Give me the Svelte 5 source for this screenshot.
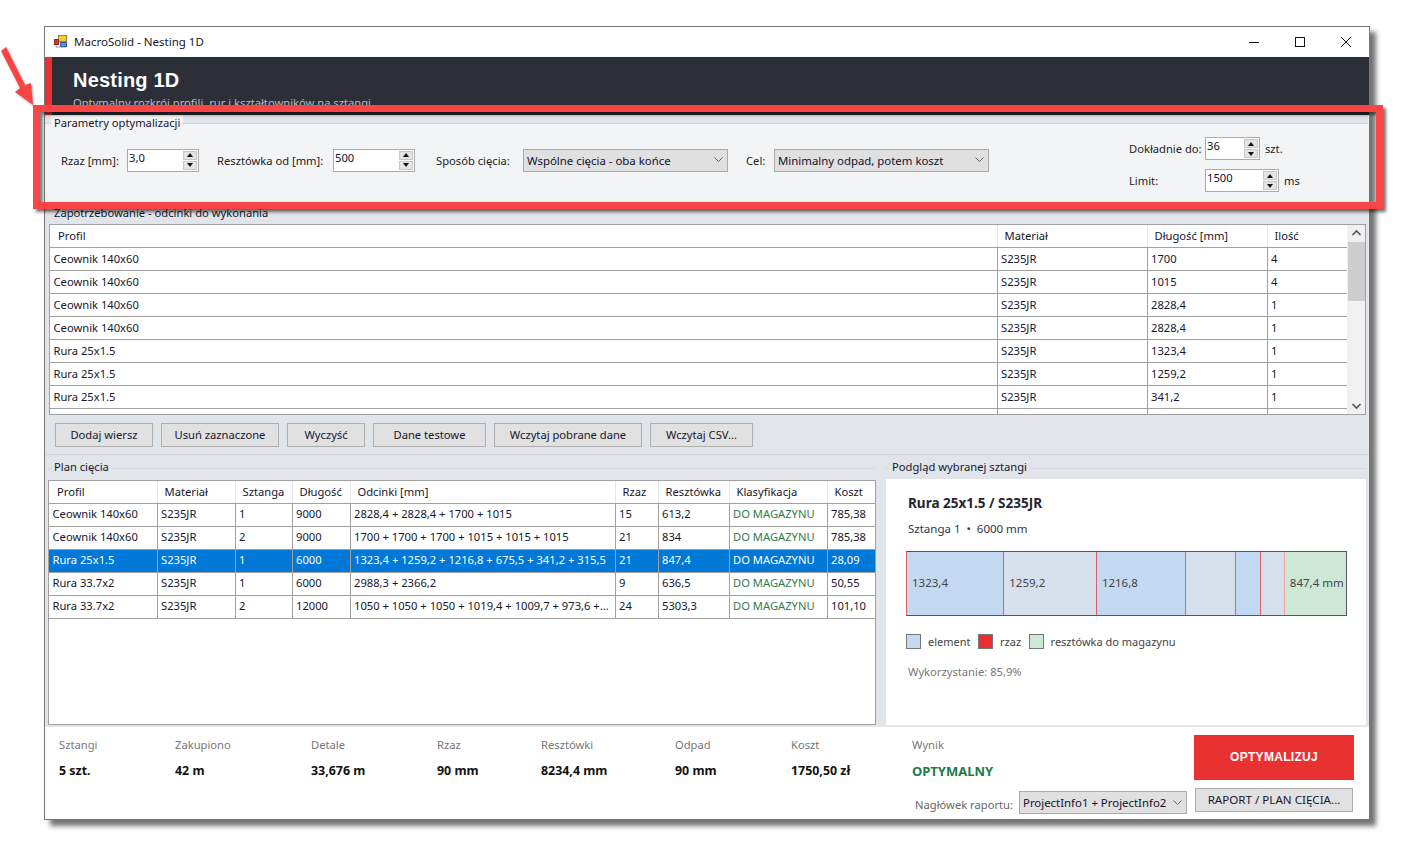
<script>
	const demand = [
		['Ceownik 140x60', 'S235JR', '1700', '4'],
		['Ceownik 140x60', 'S235JR', '1015', '4'],
		['Ceownik 140x60', 'S235JR', '2828,4', '1'],
		['Ceownik 140x60', 'S235JR', '2828,4', '1'],
		['Rura 25x1.5', 'S235JR', '1323,4', '1'],
		['Rura 25x1.5', 'S235JR', '1259,2', '1'],
		['Rura 25x1.5', 'S235JR', '341,2', '1']
	];

	const plan = [
		['Ceownik 140x60', 'S235JR', '1', '9000', '2828,4 + 2828,4 + 1700 + 1015', '15', '613,2', 'DO MAGAZYNU', '785,38'],
		['Ceownik 140x60', 'S235JR', '2', '9000', '1700 + 1700 + 1700 + 1015 + 1015 + 1015', '21', '834', 'DO MAGAZYNU', '785,38'],
		['Rura 25x1.5', 'S235JR', '1', '6000', '1323,4 + 1259,2 + 1216,8 + 675,5 + 341,2 + 315,5', '21', '847,4', 'DO MAGAZYNU', '28,09'],
		['Rura 33.7x2', 'S235JR', '1', '6000', '2988,3 + 2366,2', '9', '636,5', 'DO MAGAZYNU', '50,55'],
		['Rura 33.7x2', 'S235JR', '2', '12000', '1050 + 1050 + 1050 + 1019,4 + 1009,7 + 973,6 +...', '24', '5303,3', 'DO MAGAZYNU', '101,10']
	];
	const wybrany = 2;

	const buttons = [
		['Dodaj wiersz', 98],
		['Usuń zaznaczone', 118],
		['Wyczyść', 78],
		['Dane testowe', 113],
		['Wczytaj pobrane dane', 148],
		['Wczytaj CSV...', 103]
	];

	const stats = [
		['Sztangi', '5 szt.', 116],
		['Zakupiono', '42 m', 136],
		['Detale', '33,676 m', 126],
		['Rzaz', '90 mm', 104],
		['Resztówki', '8234,4 mm', 134],
		['Odpad', '90 mm', 116],
		['Koszt', '1750,50 zł', 121]
	];

	const odcinki = [
		{ v: 1323.4, t: '1323,4' },
		{ v: 1259.2, t: '1259,2' },
		{ v: 1216.8, t: '1216,8' },
		{ v: 675.5, t: '' },
		{ v: 341.2, t: '' },
		{ v: 315.5, t: '' }
	];
	const dlugosc = 6000;
	const rzaz = 3.5;
	const proc = (v) => ((v + rzaz) / dlugosc) * 100;
</script>

{#snippet spinner(value, cls)}
	<div class="spin {cls}">
		<span class="spin-val">{value}</span>
		<div class="spin-btns">
			<span class="spin-btn"><i class="up"></i></span>
			<span class="spin-btn"><i class="down"></i></span>
		</div>
	</div>
{/snippet}

{#snippet chevron()}
	<svg class="chev" width="9" height="6" viewBox="0 0 9 6"><path d="M0.5 0.5 L4.5 4.5 L8.5 0.5" fill="none" stroke="#666" stroke-width="1" /></svg>
{/snippet}

<div class="page">
	<div class="window">
		<div class="titlebar">
			<svg class="appicon" width="16" height="16" viewBox="0 0 16 16">
				<path d="M3 5V13H13" fill="none" stroke="#999" />
				<rect x="5.5" y="1.5" width="8" height="6" fill="#f5c842" stroke="#a08428" />
				<rect x="1.5" y="5.5" width="4" height="5" fill="#d8352a" stroke="#8a2a20" />
				<rect x="7.5" y="8.5" width="6" height="4" fill="#5b8fd8" stroke="#3a5f9a" />
			</svg>
			<span class="wintitle">MacroSolid - Nesting 1D</span>
			<div class="winbtns">
				<span class="winbtn"><svg width="10" height="10" viewBox="0 0 10 10"><path d="M0 5.5H10" stroke="#111" /></svg></span>
				<span class="winbtn"><svg width="10" height="10" viewBox="0 0 10 10"><rect x="0.5" y="0.5" width="9" height="9" fill="none" stroke="#111" /></svg></span>
				<span class="winbtn"><svg width="10" height="10" viewBox="0 0 10 10"><path d="M0 0L10 10M10 0L0 10" stroke="#111" /></svg></span>
			</div>
		</div>

		<header class="banner">
			<h1>Nesting 1D</h1>
			<p>Optymalny rozkrój profili, rur i kształtowników na sztangi</p>
		</header>

		<section class="params">
			<div class="group-line"><span>Parametry optymalizacji</span></div>
			<div class="params-row">
				<label class="l-rzaz">Rzaz [mm]:</label>
				{@render spinner('3,0', 'w72')}
				<label class="l-reszt">Resztówka od [mm]:</label>
				{@render spinner('500', 'w82')}
				<label class="l-sposob">Sposób cięcia:</label>
				<div class="combo w205"><span>Wspólne cięcia - oba końce</span>{@render chevron()}</div>
				<label class="l-cel">Cel:</label>
				<div class="combo w215"><span>Minimalny odpad, potem koszt</span>{@render chevron()}</div>
				<div class="params-right">
					<div class="pr-row">
						<label>Dokładnie do:</label>
						{@render spinner('36', 'w55')}
						<span class="unit">szt.</span>
					</div>
					<div class="pr-row">
						<label>Limit:</label>
						{@render spinner('1500', 'w74')}
						<span class="unit">ms</span>
					</div>
				</div>
			</div>
		</section>

		<section class="demand">
			<div class="legend-plain">Zapotrzebowanie - odcinki do wykonania</div>
			<div class="grid-box demand-box">
				<div class="grid-scroll">
					<table>
						<colgroup><col style="width:947px" /><col style="width:150px" /><col style="width:120px" /><col style="width:80px" /></colgroup>
						<thead><tr><th>Profil</th><th>Materiał</th><th>Długość [mm]</th><th>Ilość</th></tr></thead>
						<tbody>
							{#each demand as r}
								<tr>{#each r as c}<td>{c}</td>{/each}</tr>
							{/each}
							<tr class="cut"><td></td><td></td><td></td><td></td></tr>
						</tbody>
					</table>
				</div>
				<div class="scrollbar">
					<svg width="17" height="17" viewBox="0 0 17 17"><path d="M4.5 10L8.5 6L12.5 10" fill="none" stroke="#555" stroke-width="1.6" /></svg>
					<div class="thumb-track"><div class="thumb"></div></div>
					<svg width="17" height="17" viewBox="0 0 17 17"><path d="M4.5 7L8.5 11L12.5 7" fill="none" stroke="#555" stroke-width="1.6" /></svg>
				</div>
			</div>
			<div class="btn-row">
				{#each buttons as b}
					<button class="btn" style="width: {b[1]}px">{b[0]}</button>
				{/each}
			</div>
		</section>

		<section class="results">
			<div class="plan">
				<div class="legend-line"><span>Plan cięcia</span></div>
				<div class="grid-box plan-box">
					<table>
						<colgroup>
							<col style="width:108px" /><col style="width:78px" /><col style="width:57px" /><col style="width:58px" />
							<col style="width:265px" /><col style="width:43px" /><col style="width:71px" /><col style="width:98px" /><col style="width:48px" />
						</colgroup>
						<thead>
							<tr><th>Profil</th><th>Materiał</th><th>Sztanga</th><th>Długość</th><th>Odcinki [mm]</th><th>Rzaz</th><th>Resztówka</th><th>Klasyfikacja</th><th>Koszt</th></tr>
						</thead>
						<tbody>
							{#each plan as r, i}
								<tr class:sel={i === wybrany}>
									{#each r as c, j}<td class:green={j === 7}>{c}</td>{/each}
								</tr>
							{/each}
						</tbody>
					</table>
				</div>
			</div>
			<div class="preview">
				<div class="legend-line"><span>Podgląd wybranej sztangi</span></div>
				<div class="preview-panel">
					<h2>Rura 25x1.5 / S235JR</h2>
					<p class="sub">Sztanga 1 &nbsp;•&nbsp; 6000 mm</p>
					<div class="bar">
						{#each odcinki as o, i}
							<div class="seg" class:alt={i % 2 === 1} style="width: {proc(o.v)}%">{o.t}</div>
						{/each}
						<div class="seg rest">847,4 mm</div>
					</div>
					<div class="key">
						<span class="sw sw-el"></span><span>element</span>
						<span class="sw sw-rz"></span><span>rzaz</span>
						<span class="sw sw-re"></span><span>resztówka do magazynu</span>
					</div>
					<p class="usage">Wykorzystanie: 85,9%</p>
				</div>
			</div>
		</section>

		<footer class="foot">
			<div class="stats">
				{#each stats as s}
					<div class="stat" style="width: {s[2]}px">
						<div class="st-label">{s[0]}</div>
						<div class="st-value">{s[1]}</div>
					</div>
				{/each}
				<div class="stat">
					<div class="st-label">Wynik</div>
					<div class="st-value ok">OPTYMALNY</div>
				</div>
			</div>
			<button class="run">OPTYMALIZUJ</button>
			<div class="report">
				<span class="rep-label">Nagłówek raportu:</span>
				<div class="combo w168 c-rep"><span>ProjectInfo1 + ProjectInfo2</span>{@render chevron()}</div>
			</div>
			<button class="btn rep-btn">RAPORT / PLAN CIĘCIA...</button>
		</footer>
	</div>

	<!-- adnotacja na zrzucie -->
	<div class="mark"></div>
	<svg class="arrow" width="40" height="70" viewBox="0 0 40 70">
		<path d="M1 13 L6 9 L25 47 L31 45 L33 67 L15 54 L20 50 Z" fill="#fb4444" />
	</svg>
</div>

<style>
	:global(body) {
		margin: 0;
		background: #fff;
	}

	.page {
		position: relative;
		width: 1410px;
		height: 848px;
		padding: 26px 0 0 44px;
		box-sizing: border-box;
		font-family: "Noto Sans", "Open Sans", sans-serif;
		font-size: 11.2px;
		color: #111;
		overflow: hidden;
	}

	.window {
		width: 1326px;
		height: 794px;
		box-sizing: border-box;
		border: 1px solid #777;
		background: #e1e4e9;
		box-shadow: 6px 6px 5px rgba(0, 0, 0, 0.55);
		display: flex;
		flex-direction: column;
	}

	.titlebar {
		height: 30px;
		flex: none;
		background: #fff;
		display: flex;
		align-items: center;
		padding-left: 8px;
	}

	.appicon {
		margin-right: 5px;
	}

	.wintitle {
		font-size: 11.5px;
		color: #16162e;
		padding-bottom: 1px;
	}

	.winbtns {
		margin-left: auto;
		display: flex;
	}

	.winbtn {
		width: 46px;
		height: 30px;
		display: flex;
		align-items: center;
		justify-content: center;
	}

	.banner {
		height: 58px;
		flex: none;
		box-sizing: border-box;
		background: #2c2f38;
		border-left: 7px solid #e93131;
		padding: 10px 0 0 21px;
		overflow: hidden;
	}

	h1 {
		margin: 0;
		font-size: 20px;
		line-height: 27px;
		font-weight: 700;
		color: #fff;
		letter-spacing: 0.2px;
		font-family: "Liberation Sans", sans-serif;
	}

	.banner p {
		margin: 0;
		font-size: 11.2px;
		line-height: 18px;
		color: #b8bbc2;
	}

	.params {
		height: 91px;
		flex: none;
		box-sizing: border-box;
		background: #f3f4f6;
		position: relative;
		padding-top: 0;
	}

	.group-line {
		height: 8px;
		border-bottom: 1px solid #d6d8dc;
		background: #e1e4e9;
		position: relative;
		margin-right: 1px;
	}

	.group-line span {
		position: absolute;
		left: 6px;
		top: 0;
		line-height: 16px;
		padding: 0 3px;
		background: #f3f4f6;
		color: #16162e;
	}

	.params-row {
		display: flex;
		align-items: center;
		height: 68px;
		padding-left: 16px;
		margin-top: 2px;
	}

	.params-row > label {
		color: #222;
		white-space: nowrap;
	}

	.l-rzaz { width: 66px; }
	.l-reszt { width: 116px; margin-left: 18px; }
	.l-sposob { width: 87px; margin-left: 21px; }
	.l-cel { width: 28px; margin-left: 18px; }

	.spin {
		height: 23px;
		box-sizing: border-box;
		border: 1px solid #aaa;
		background: #fff;
		position: relative;
		flex: none;
	}

	.w72 { width: 72px; }
	.w82 { width: 82px; }
	.w55 { width: 55px; }
	.w74 { width: 74px; }

	.spin-val {
		position: absolute;
		left: 1px;
		top: 0;
		line-height: 16px;
		color: #101030;
	}

	.spin-btns {
		position: absolute;
		right: 1px;
		top: 1px;
		bottom: 1px;
		width: 14px;
		display: flex;
		flex-direction: column;
		gap: 1px;
	}

	.spin-btn {
		flex: 1;
		background: #e4e4e4;
		border: 1px solid #c8c8c8;
		display: flex;
		align-items: center;
		justify-content: center;
	}

	.spin-btn i {
		width: 0;
		height: 0;
		border-left: 3px solid transparent;
		border-right: 3px solid transparent;
	}

	.up { border-bottom: 4px solid #111; }
	.down { border-top: 4px solid #111; }

	.combo {
		height: 23px;
		box-sizing: border-box;
		border: 1px solid #aaa;
		background: #e0e0e0;
		display: flex;
		align-items: center;
		justify-content: space-between;
		padding: 0 4px 0 3px;
		color: #101030;
		font-size: 11.4px;
		flex: none;
		white-space: nowrap;
	}

	.w205 { width: 205px; }
	.w215 { width: 215px; }
	.w168 { width: 168px; }

	.params-right {
		margin-left: 140px;
		display: flex;
		flex-direction: column;
		gap: 9px;
		margin-top: 9px;
	}

	.pr-row {
		display: flex;
		align-items: center;
	}

	.pr-row label {
		width: 76px;
		color: #222;
		white-space: nowrap;
	}

	.unit {
		margin-left: 5px;
		color: #222;
	}

	.demand {
		height: 249px;
		flex: none;
		box-sizing: border-box;
		padding: 0 3px 0 4px;
		border-bottom: 1px solid #d3d6db;
	}

	.legend-plain {
		line-height: 14px;
		padding: 0 0 0 5px;
		height: 18px;
		color: #16162e;
	}

	.grid-box {
		box-sizing: border-box;
		border: 1px solid #a0a0a0;
		background: #fff;
		overflow: hidden;
	}

	.demand-box {
		height: 191px;
		display: flex;
	}

	.demand-box td {
		padding-bottom: 0;
	}

	.grid-scroll {
		flex: 1;
		overflow: hidden;
	}

	table {
		table-layout: fixed;
		border-collapse: collapse;
		width: 100%;
	}

	th {
		height: 22px;
		box-sizing: border-box;
		padding: 0 0 0 7px;
		text-align: left;
		font-weight: 400;
		color: #16162e;
		border-right: 1px solid #e6e6e6;
		border-bottom: 1px solid #a0a0a0;
		white-space: nowrap;
		overflow: hidden;
		background: #fff;
	}

	th:first-child {
		padding-left: 8px;
	}

	td {
		height: 23px;
		box-sizing: border-box;
		padding: 0 0 1.5px 3.5px;
		border-right: 1px solid #a0a0a0;
		border-bottom: 1px solid #a0a0a0;
		white-space: nowrap;
		overflow: hidden;
		color: #16162e;
	}

	.green {
		color: #2f7d4d;
	}

	tr.sel td {
		background: #0078d7;
		color: #fff;
	}

	.scrollbar {
		width: 17px;
		flex: none;
		background: #f0f0f0;
		display: flex;
		flex-direction: column;
		border-left: 1px solid #f0f0f0;
	}

	.thumb-track {
		flex: 1;
	}

	.thumb {
		height: 59px;
		background: #cdcdcd;
	}

	.btn-row {
		display: flex;
		gap: 8px;
		padding: 8px 0 0 6px;
	}

	.btn {
		height: 24px;
		box-sizing: border-box;
		border: 1px solid #adadad;
		background: #e1e1e1;
		font: inherit;
		color: #16162e;
		padding: 0 0 1px;
		white-space: nowrap;
	}

	.results {
		height: 271px;
		flex: none;
		display: grid;
		grid-template-columns: 839px 1fr;
		position: relative;
	}

	.legend-line {
		height: 25px;
		position: relative;
	}

	.legend-line::before {
		content: "";
		position: absolute;
		left: 0;
		right: 0;
		top: 13px;
		border-top: 1px solid #d6d8dc;
	}

	.legend-line span {
		position: absolute;
		top: 4px;
		line-height: 16px;
		padding: 0 3px;
		background: #e1e4e9;
		color: #16162e;
	}

	.plan .legend-line span { left: 3px; }
	.preview .legend-line span { left: 5px; }

	.plan {
		padding-left: 3px;
		padding-right: 8px;
	}

	.plan-box {
		height: 245px;
	}

	.preview {
		padding-right: 3px;
	}

	.preview .legend-line {
		height: 24px;
	}

	.preview-panel {
		height: 246px;
		box-sizing: border-box;
		background: #fff;
		margin: 0 0 0 2px;
		padding: 15px 20px 0 22px;
		width: 480px;
	}

	h2 {
		margin: 0;
		font-size: 13.5px;
		line-height: 18px;
		font-weight: 700;
		color: #252530;
	}

	.sub {
		margin: 9px 0 0;
		font-size: 11.5px;
		line-height: 16px;
		color: #33334a;
	}

	.bar {
		margin: 14px 0 0 -2px;
		width: 441px;
		height: 65px;
		box-sizing: border-box;
		border: 1px solid #555;
		border-width: 1px 1px 1px 0;
		display: flex;
		color: #444;
		font-size: 11.5px;
	}

	.seg {
		box-sizing: border-box;
		border-left: 1px solid #e0606a;
		background: #c3d9f1;
		display: flex;
		align-items: center;
		padding: 0 0 3px 5px;
		white-space: nowrap;
		overflow: hidden;
	}

	.seg.alt {
		background: #d5e0ec;
	}

	.seg.rest {
		flex: 1;
		background: #cde9d6;
		border-left-color: #e8a8a8;
	}

	.key {
		display: flex;
		align-items: center;
		margin: 18px 0 0 -2px;
		color: #444;
		font-size: 11px;
	}

	.sw {
		width: 15px;
		height: 15px;
		box-sizing: border-box;
		border: 1px solid #777;
		flex: none;
		margin-right: 7px;
	}

	.key span:not(.sw) {
		margin-right: 7.5px;
	}

	.sw-el { background: #c3d9f1; }
	.sw-rz { background: #ea2e30; }
	.sw-re { background: #cde9d6; }

	.usage {
		margin: 15px 0 0;
		line-height: 16px;
		color: #777;
	}

	.foot {
		flex: 1;
		background: #fff;
		display: grid;
		grid-template-columns: 1fr 160px;
		grid-template-rows: 45px 24px;
		column-gap: 8px;
		row-gap: 8px;
		padding: 8px 15px 0 14px;
		box-sizing: border-box;
		border-top: 1px solid #e4e6ea;
	}

	.stats {
		display: flex;
		padding-top: 2px;
	}

	.stat {
		flex: none;
	}

	.st-label {
		line-height: 16px;
		color: #777;
	}

	.st-value {
		margin-top: 10px;
		line-height: 16px;
		font-weight: 700;
		color: #111;
		font-size: 12.4px;
	}

	.st-value.ok {
		color: #1e7a45;
		font-size: 13px;
	}

	.run {
		height: 45px;
		border: none;
		background: #e93131;
		color: #fff;
		font-family: "Liberation Sans", sans-serif;
		font-weight: 700;
		font-size: 12px;
		letter-spacing: 0.3px;
		padding: 0 0 2px;
	}

	.report {
		display: flex;
		align-items: center;
		justify-content: flex-end;
		gap: 6px;
		margin: 3px -1px 0 0;
		height: 23px;
	}

	.rep-label {
		color: #666;
		padding-top: 4px;
	}

	.rep-btn {
		width: 158px;
		height: 24px;
		margin-left: 1px;
		font-size: 11.6px;
	}

	.mark {
		position: absolute;
		left: 33px;
		top: 105px;
		width: 1350px;
		height: 104px;
		box-sizing: border-box;
		border: 7px solid #fb4444;
		box-shadow: 3px 3px 3px rgba(0, 0, 0, 0.55), inset 3px 3px 3px rgba(0, 0, 0, 0.5);
	}

	.arrow {
		position: absolute;
		left: 0;
		top: 38px;
		filter: drop-shadow(1px 1px 1px rgba(0, 0, 0, 0.35));
	}
</style>
